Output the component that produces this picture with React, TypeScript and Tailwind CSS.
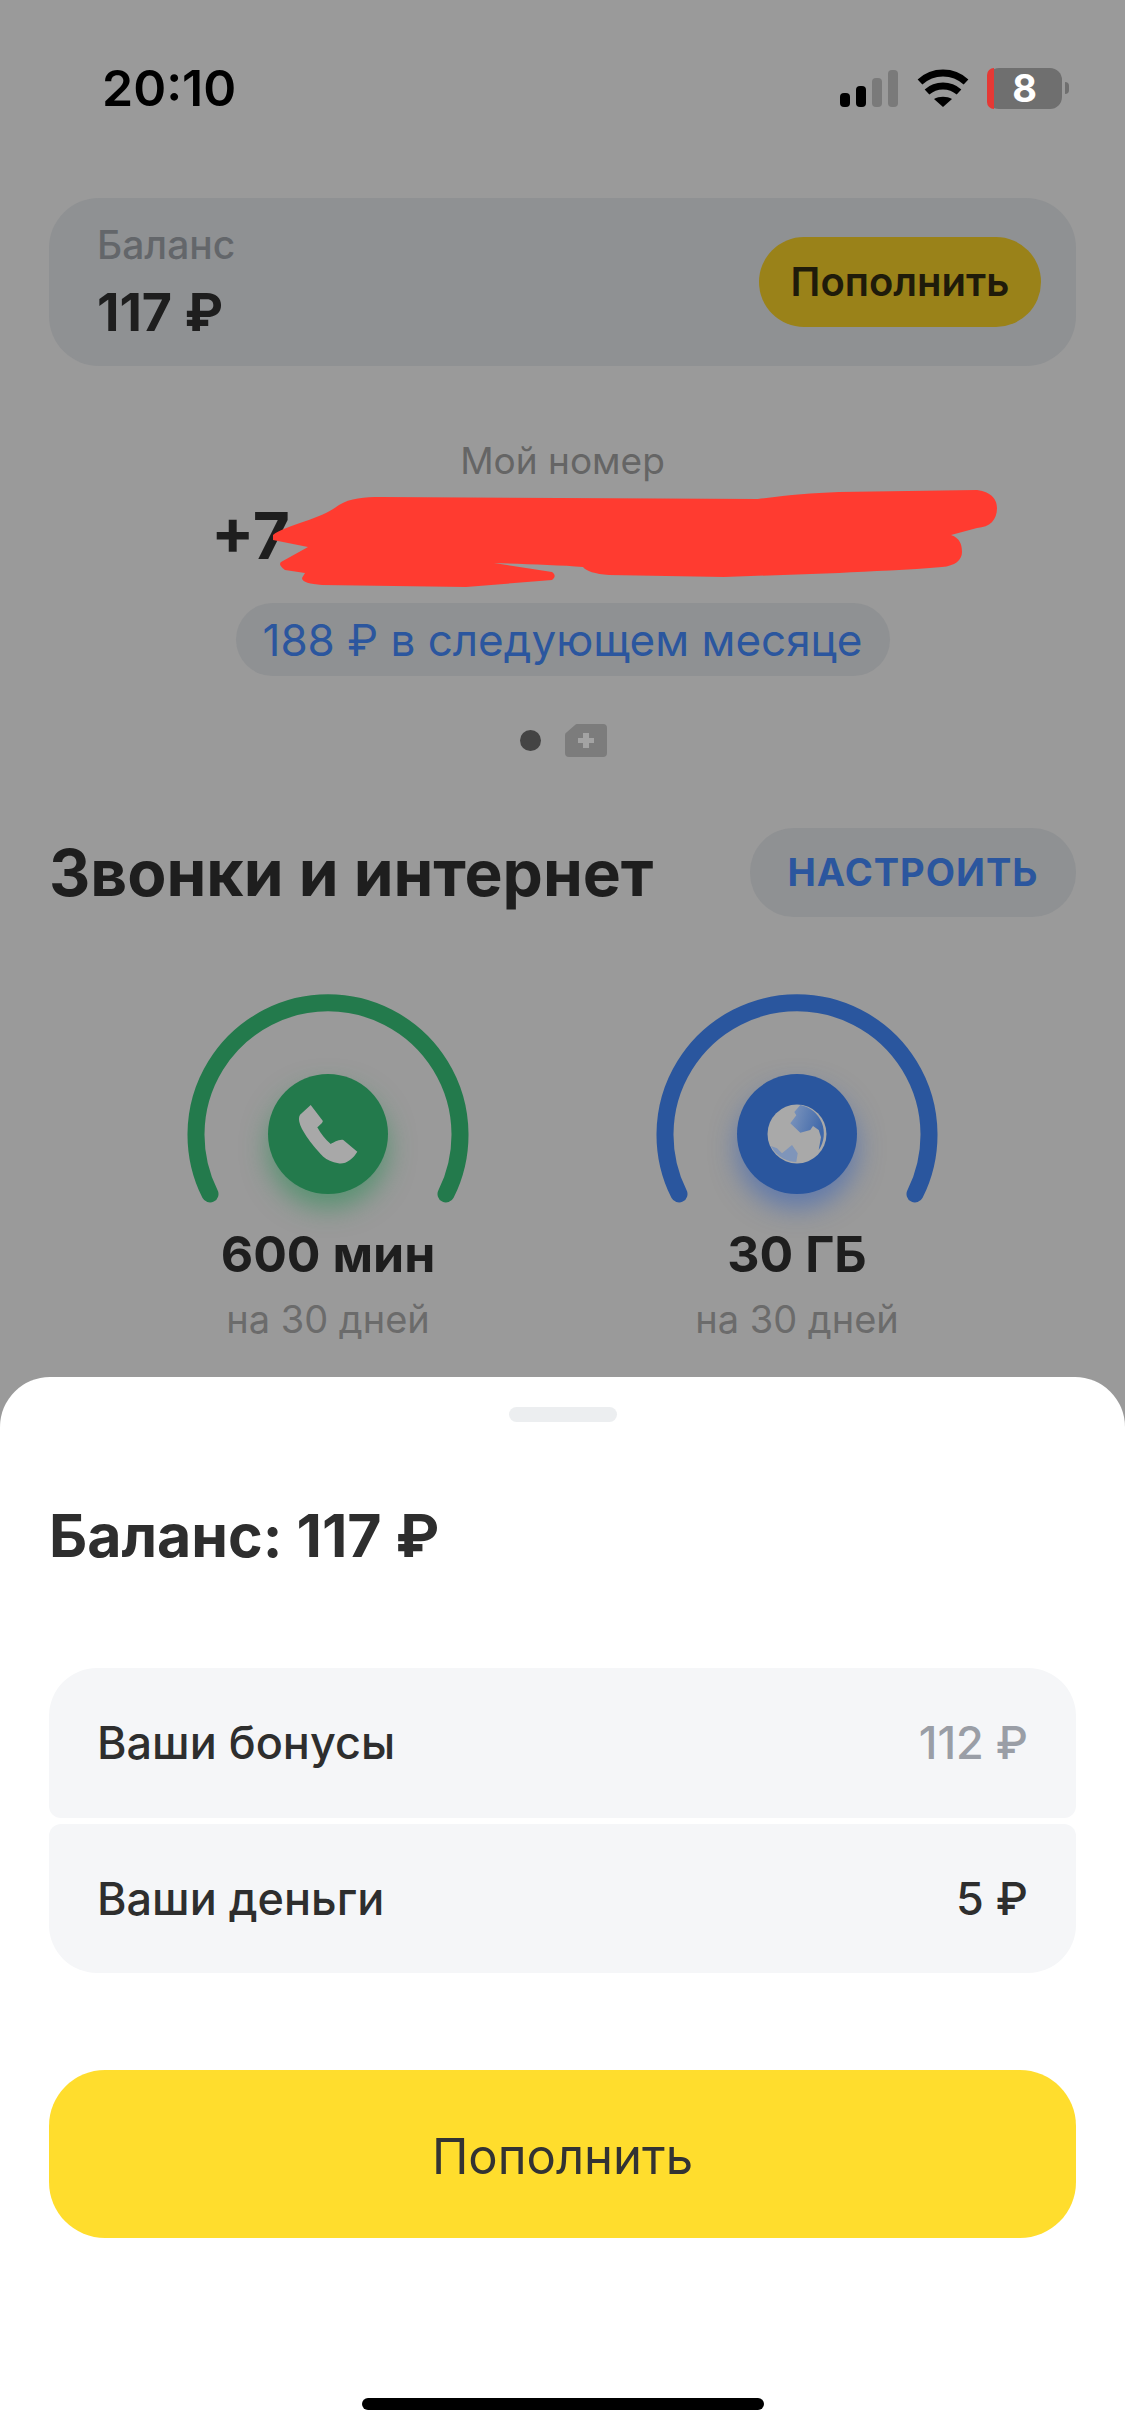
import React from 'react';

const Wifi = () => (
  <svg width="52" height="38" viewBox="0 0 52 38" fill="none">
    <path d="M3 13C16 1 36 1 49 13" stroke="#000" strokeWidth="7" />
    <path d="M10 23C19 15 33 15 42 23" stroke="#000" strokeWidth="7" />
    <path d="M17 30C22 27 30 27 35 30L26 38Z" fill="#000" />
  </svg>
);

const PhoneGlyph = () => (
  <svg className="absolute inset-0" width="120" height="120" viewBox="0 0 120 120">
    <path
      d="M42.7 31L54.7 46.7C55.5 48 52 51 49.3 53.3C53 60 57 65 62.7 70C66 68.5 71 65 75.3 66L89.3 77.7C87 81 85 84 82 86C78 89 74 90 70.3 89.3C64 88 59 86 55.3 82.7C48 75 43 69 38.7 62.7C35 57 32 52 31.3 47.7C30.5 43 31.5 41 33.7 39.3Z"
      fill="#a8a8a8"
    />
  </svg>
);

const GlobeGlyph = () => (
  <svg className="absolute inset-0" width="120" height="120" viewBox="0 0 120 120">
    <defs>
      <linearGradient id="land" x1="0" y1="0" x2="1" y2="0.4">
        <stop offset="0" stopColor="#8097bd" />
        <stop offset="1" stopColor="#3f68aa" />
      </linearGradient>
    </defs>
    <circle cx="60" cy="60" r="29.5" fill="#a9a9a9" />
    <path
      d="M63.3 31L57.3 38L59.3 41.3L53.3 49.3L63.3 58.7L73.3 56L76 52L81.7 56L84 63.3L81.7 76A29 29 0 0 0 63.3 31Z"
      fill="url(#land)"
    />
    <path d="M34 72L40 74.3L45 79.3L55 71L60.7 79.3L59.3 88C52 88 40 84 34 72Z" fill="#7f95ba" />
  </svg>
);

interface GaugeProps {
  color: string;
  glow: string;
  value: string;
  children: React.ReactNode;
}

const Gauge: React.FC<GaugeProps> = ({ color, glow, value, children }) => (
  <div className="flex w-[282px] flex-col items-center">
    <div className="relative h-[210px] w-[282px]">
      <svg className="overflow-visible" width="282" height="210" viewBox="-141 -141 282 210" fill="none">
        <path d="M-118 60A132 132 0 1 1 118 60" stroke={color} strokeWidth="17" strokeLinecap="round" />
      </svg>
      <div className={`absolute left-[81px] top-[81px] h-[120px] w-[120px] rounded-full ${glow}`}>{children}</div>
    </div>
    <div className="mt-[23px] text-[50px] font-bold leading-[56px] text-[#1e1e1e]">{value}</div>
    <div className="mt-[16px] text-[38px] leading-[42px] text-[#6b6b6b]">на 30 дней</div>
  </div>
);

const App: React.FC = () => {
  return (
    <div className="relative flex h-[2436px] w-[1125px] flex-col overflow-hidden bg-[#9a9a9a] font-[Inter,sans-serif]">
      {/* status bar */}
      <div className="mt-[66px] flex h-[44px] items-center justify-between pl-[102px] pr-[56px]">
        <span className="text-[50px] font-semibold leading-none text-black">20:10</span>
        <div className="flex items-center">
          <div className="flex items-end gap-[6px]">
            <div className="h-[14px] w-[10px] rounded-[4px] bg-black" />
            <div className="h-[21px] w-[10px] rounded-[4px] bg-black" />
            <div className="h-[29px] w-[10px] rounded-[4px] bg-[#7a7a7a]" />
            <div className="h-[37px] w-[10px] rounded-[4px] bg-[#7a7a7a]" />
          </div>
          <div className="ml-[19px]">
            <Wifi />
          </div>
          <div className="relative ml-[18px] flex h-[41px] w-[75px] items-center justify-center rounded-[12px] bg-[#6f6f6f]">
            <div className="absolute inset-y-0 left-0 w-[7px] rounded-l-[12px] bg-[#e53935]" />
            <span className="text-[38px] font-bold leading-[41px] text-white">8</span>
          </div>
          <div className="ml-[3px] h-[12px] w-[4px] rounded-r-full bg-[#6f6f6f]" />
        </div>
      </div>

      {/* balance card */}
      <div className="mx-[49px] mt-[88px] flex h-[168px] items-center justify-between rounded-[50px] bg-[#8f9193] pl-[48px] pr-[35px]">
        <div className="flex flex-col">
          <span className="text-[39px] font-medium leading-[44px] text-[#63666a]">Баланс</span>
          <span className="mt-[18px] text-[52px] font-bold leading-[56px] text-[#1e1e1e]">117 ₽</span>
        </div>
        <div className="flex h-[90px] w-[282px] items-center justify-center rounded-[45px] bg-[#9a8219] text-[40px] font-semibold text-[#1f1b0a]">
          Пополнить
        </div>
      </div>

      {/* number */}
      <div className="mt-[75px] flex flex-col items-center">
        <span className="text-[37px] leading-[40px] text-[#656565]">Мой номер</span>
        <div className="relative mt-[20px] h-[70px] w-full pl-[211px] text-[64px] font-bold leading-[70px] text-[#1e1e1e]">
          +7
          <svg className="absolute left-[270px] top-[-16px]" width="730" height="105" viewBox="270 485 730 105">
            <path
              d="M273 535C285 525 320 520 339 505C350 498 365 497 380 497L758 499C790 495 810 493 839 492L977 490C992 492 997 500 997 508C997 520 990 527 977 528L951 535C960 538 962 545 962 552C962 560 955 566 942 567C910 570 870 571 839 573L724 577L609 575C595 574 586 571 583 567C560 565 520 564 494 563L552 572C556 575 555 578 552 580L466 587L322 585C310 584 302 582 302 578L305 573L285 570C280 566 279 564 281 562L308 547L273 540Z"
              fill="#ff3b30"
            />
          </svg>
        </div>
        <div className="mt-[32px] flex h-[73px] w-[654px] items-center justify-center rounded-full bg-[#8f9193] text-[44px] leading-none text-[#2b569e]">
          188 ₽ в следующем месяце
        </div>
        <div className="mt-[48px] flex h-[33px] items-center gap-[24px] pl-[1px]">
          <div className="h-[21px] w-[21px] rounded-full bg-[#444]" />
          <svg width="42" height="33" viewBox="0 0 42 33">
            <path d="M12 0H38Q42 0 42 4V29Q42 33 38 33H4Q0 33 0 29V11Q0 9 2 8L10 1Q11 0 12 0Z" fill="#7c7c7c" />
            <path d="M18 9H24V14H29V19H24V24H18V19H13V14H18Z" fill="#a3a3a3" />
          </svg>
        </div>
      </div>

      {/* calls and internet */}
      <div className="ml-[49px] mr-[49px] mt-[71px] flex h-[89px] items-center justify-between">
        <span className="text-[64px] font-bold leading-none text-[#1e1e1e]">Звонки и интернет</span>
        <div className="flex h-[89px] w-[326px] items-center justify-center rounded-[44px] bg-[#8f9193] text-[38px] font-bold tracking-[1px] text-[#2b569e]">
          НАСТРОИТЬ
        </div>
      </div>
      <div className="mt-[76px] flex justify-center gap-[187px]">
        <Gauge color="#237a4c" glow="bg-[#237a4c] shadow-[0_14px_26px_rgba(35,140,80,0.55)]" value="600 мин">
          <PhoneGlyph />
        </Gauge>
        <Gauge color="#2a569e" glow="bg-[#2a569e] shadow-[0_14px_26px_rgba(40,90,190,0.5)]" value="30 ГБ">
          <GlobeGlyph />
        </Gauge>
      </div>

      {/* bottom sheet */}
      <div className="absolute inset-x-0 bottom-0 flex h-[1059px] flex-col rounded-t-[50px] bg-white px-[49px]">
        <div className="mx-auto mt-[30px] h-[15px] w-[108px] rounded-full bg-[#eceef0]" />
        <div className="mt-[79px] text-[59px] font-bold leading-[70px] text-[#2e2e2e]">Баланс: 117 ₽</div>
        <div className="mt-[97px] flex flex-col gap-[6px]">
          <div className="flex h-[150px] items-center justify-between rounded-t-[48px] rounded-b-[12px] bg-[#f5f6f8] px-[48px] text-[45px] font-medium text-[#2e2e2e]">
            <span>Ваши бонусы</span>
            <span className="text-[#9a9ea6]">112 ₽</span>
          </div>
          <div className="flex h-[149px] items-center justify-between rounded-t-[12px] rounded-b-[48px] bg-[#f5f6f8] px-[48px] text-[45px] font-medium text-[#2e2e2e]">
            <span>Ваши деньги</span>
            <span>5 ₽</span>
          </div>
        </div>
        <div className="mt-[97px] flex h-[168px] shrink-0 items-center justify-center rounded-[56px] bg-[#ffdd2d] pt-[5px] text-[49px] text-[#333]">
          Пополнить
        </div>
        <div className="mx-auto mt-[160px] h-[12px] w-[402px] shrink-0 rounded-full bg-black" />
      </div>
    </div>
  );
};

export default App;
